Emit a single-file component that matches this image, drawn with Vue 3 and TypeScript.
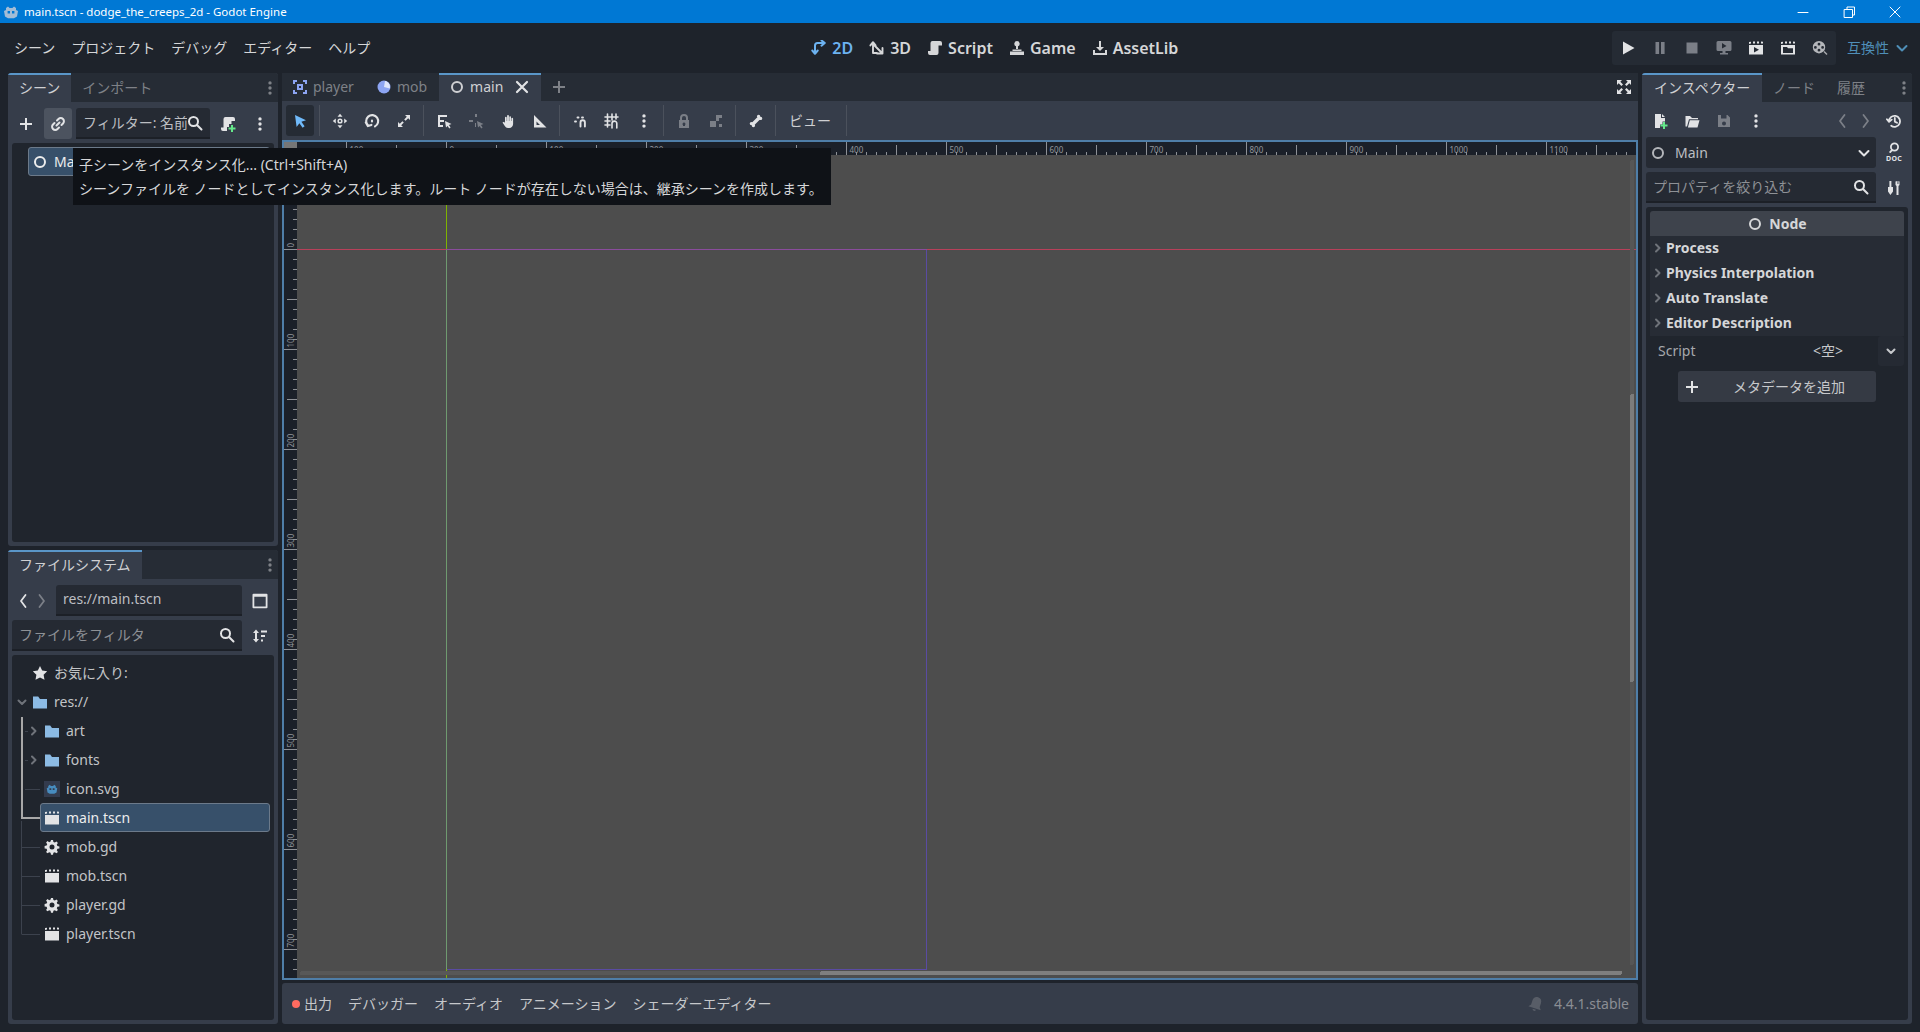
<script setup lang="ts">
import { h, type FunctionalComponent } from 'vue'

type Glyph = { d: string; s?: number; x?: string; c?: string }

const dots = 'M8 1.2a1.7 1.7 0 1 0 0 3.4 1.7 1.7 0 0 0 0-3.4zM8 6.3a1.7 1.7 0 1 0 0 3.4 1.7 1.7 0 0 0 0-3.4zM8 11.4a1.7 1.7 0 1 0 0 3.4 1.7 1.7 0 0 0 0-3.4z'
const clapper = 'M1 2l2-.3V3.6L1 3.9zM5 1.5h2v1.9H5zM9 1.5h2v1.9H9zM13 1.5l2 .2v1.9l-2-.2zM1 5h14v9.5H1z'
const cursor = 'M9 8l6.5 3-2.6 1 1.7 2.6-1.3.9-1.7-2.6L10 14.5z'

const glyphs: Record<string, Glyph> = {
  node: { d: 'M8 2a6 6 0 1 0 0 12A6 6 0 0 0 8 2zm0 2a4 4 0 1 1 0 8 4 4 0 0 1 0-8z' },
  plus: { d: 'M7 2h2v5h5v2H9v5H7V9H2V7h5z' },
  link: { d: 'M6.5 9.5l3-3M7 4.5l1.5-1.5a2.8 2.8 0 0 1 4.5 4.5L11.5 9M9 11.5L7.5 13A2.8 2.8 0 0 1 3 8.5L4.5 7', s: 2 },
  search: { d: 'M6.5 2a4.5 4.5 0 1 0 0 9 4.5 4.5 0 0 0 0-9zM10 10l4.5 4.5', s: 2 },
  scriptAdd: {
    d: 'M5.5 1H13a2 2 0 0 1 2 2v2h-3.5v3H9v3H7v4H3a2 2 0 0 1-2-2v-1.5h2.5V3a2 2 0 0 1 2-2z',
    x: 'M11 9h2v2.5h2.5v2H13V16h-2v-2.5H8.5v-2H11z',
    c: '#64e88a',
  },
  dots: { d: dots },
  scene2d: { d: 'M1 1h4v2H3v2H1zM11 1h4v4h-2V3h-2zM1 11h2v2h2v2H1zM13 11h2v4h-4v-2h2zM5 5h6v6H5zM7 7v2h2V7z' },
  globe: {
    d: 'M8 1.5a6.5 6.5 0 1 0 0 13 6.5 6.5 0 0 0 0-13z',
    x: 'M9 2c3 .4 5 2.8 5 6 0 .6-.1 1-.2 1.5L8 8z',
    c: '#dfe6fb',
  },
  close: { d: 'M3 3l10 10M13 3L3 13', s: 2.2 },
  fullscreen: { d: 'M1 1h5L4.3 2.7 7 5.4 5.4 7 2.7 4.3 1 6zM15 1v5l-1.7-1.7L10.6 7 9 5.4l2.7-2.7L10 1zM1 15v-5l1.7 1.7L5.4 9 7 10.6l-2.7 2.7L6 15zM15 15h-5l1.7-1.7L9 10.6 10.6 9l2.7 2.7L15 10z' },
  arrow: { d: 'M3 2l11 5.2-4.6 1.6 3.2 4.4-2 1.5-3.2-4.4L4.6 14z' },
  move: { d: 'M8 .8l2.5 3h-5zM8 15.2l-2.5-3h5zM.8 8l3-2.5v5zM15.2 8l-3 2.5v-5zM8 5.4a2.6 2.6 0 1 0 0 5.2 2.6 2.6 0 0 0 0-5.2zm0 1.5a1.1 1.1 0 1 1 0 2.2 1.1 1.1 0 0 1 0-2.2z' },
  rotate: { d: 'M4.2 12.6A6 6 0 1 1 11 13.4M1.8 9.5l2 3.6 3.6-1.2M8 7.6v.8', s: 2.1 },
  scale: { d: 'M9 2h5v5l-1.8-1.8L9.6 7.8 8.2 6.4l2.6-2.6zM7 14H2V9l1.8 1.8 2.6-2.6 1.4 1.4-2.6 2.6z' },
  list: { d: `M2 2h9v2H4v3h4v2H4v3h3v2H2z${cursor}` },
  pivot: { d: `M7 1h2v3H7zM1 7h4v2H1zM7 10h1v4H7z${cursor}` },
  hand: { d: 'M2.5 9.5l1.6-.8L5 10V4.4a.9.9 0 0 1 1.7 0V8h.4V2.8a.9.9 0 0 1 1.8 0V8h.4V3.8a.9.9 0 0 1 1.7 0V8h.4V5.4a.9.9 0 0 1 1.7 0V11c0 2.2-1.6 4-3.8 4H8c-1.5 0-2.4-.8-3.2-2z' },
  ruler: { d: 'M2 2l12.5 12.5H2zM4.5 8.5v3.5H8z' },
  snap: { d: 'M8.5 13.5V9.5a2.2 2.2 0 0 1 4.4 0v4M3 8.5h1M5.5 4.5h1M10 4.5h1', s: 1.9 },
  grid: { d: 'M1 4h13M1 8h5M1 12h5M3.5 1v13M8 1v6M12 1v5M8 15v-4.5a2 2 0 0 1 4.8 0V15', s: 1.6 },
  lock: { d: 'M8 1a4 4 0 0 0-4 4v2H3v8h10V7h-1V5a4 4 0 0 0-4-4zm0 2a2 2 0 0 1 2 2v2H6V5a2 2 0 0 1 2-2zm0 6.5a1.5 1.5 0 0 1 1 2.6V13H7v-.9a1.5 1.5 0 0 1 1-2.6z' },
  group: { d: 'M2 8h3v3H2zM5 11h3v3H5zM2 11h3v3H2zM5 8h3v3H5zM8 2h6v3H8zM8 5h3v3H8zM11 11h3v3h-3z' },
  bone: { d: 'M5 11l6-6M3.4 10.6v.01M5.4 12.6v.01M10.6 3.4v.01M12.6 5.4v.01', s: 3.4 },
  d2: { d: 'M4 13V5.5a2.5 2.5 0 0 1 2.5-2.5H13M1.3 10.5L4 13.8l2.7-3.3M10.5.4L13.8 3l-3.3 2.7', s: 2 },
  d3: { d: 'M4 13V2.5M1.4 5.4L4 2.2l2.6 3.2M4 4l9 9M8 13.5h5.5V8M4 13h4', s: 1.9 },
  script: { d: 'M5.5 1H13a2 2 0 0 1 2 2v2.5h-3.5V13a2 2 0 0 1-2 2H3a2 2 0 0 1-2-2v-2h2.5V3a2 2 0 0 1 2-2z' },
  game: { d: 'M8 1a2.7 2.7 0 0 0-1 5.2V9h2V6.2A2.7 2.7 0 0 0 8 1zM3.5 9.5h9V11h-9zM1 11.5h14v3.5H1z' },
  asset: { d: 'M7 1h2v6h3l-4 4-4-4h3zM1 10h2v3h10v-3h2v5H1z' },
  play: { d: 'M3 1.5L14.5 8 3 14.5z' },
  pause: { d: 'M3.5 2h3.6v12H3.5zM9 2h3.6v12H9z' },
  stop: { d: 'M2.5 2.5h11v11h-11z' },
  remote: { d: 'M2 1h12a1.5 1.5 0 0 1 1.5 1.5v7A1.5 1.5 0 0 1 14 11H2A1.5 1.5 0 0 1 .5 9.5v-7A1.5 1.5 0 0 1 2 1zM6 3v5.5L10.5 6zM6.5 11h3v2h-3zM4 13h8v1.5H4z' },
  movie: { d: `${clapper}M6 7l5 2.7-5 2.8z` },
  movieFolder: { d: `${clapper}M3 7h4l1 1.2h5V13H3z` },
  scene: { d: clapper },
  reel: {
    d: 'M7 1a6.2 6.2 0 1 0 0 12.4A6.2 6.2 0 0 0 7 1zm0 1.8a1.4 1.4 0 1 1 0 2.8 1.4 1.4 0 0 1 0-2.8zM3.4 6a1.4 1.4 0 1 1 0 2.8 1.4 1.4 0 0 1 0-2.8zm7.2 0a1.4 1.4 0 1 1 0 2.8 1.4 1.4 0 0 1 0-2.8zM7 8.8a1.4 1.4 0 1 1 0 2.8 1.4 1.4 0 0 1 0-2.8z',
    x: 'M11.5 12l1-1 3 3-1 1z',
    c: '#a9abaf',
  },
  newFile: {
    d: 'M3 1h6v4h4v3.5h-2.5v3H8V15H3zM10 1l3 3h-3z',
    x: 'M11 9h2v2.5h2.5v2H13V16h-2v-2.5H8.5v-2H11z',
    c: '#64e88a',
  },
  open: { d: 'M1.5 3h4.5l2 2h6v1.2H5L3 13.5H1.5zM5.8 7.2H15.5L13.5 14.5H3.9z' },
  save: { d: 'M2 2h9.5L14 4.5V14H2zM5 2v3.5h5.5V2zM8 8.5a2 2 0 1 0 0 4 2 2 0 0 0 0-4z' },
  history: { d: 'M3 8.5a5.5 5.5 0 1 1 2.2 4.2M.9 6.2l2.2 2.7 2.6-2.3M8.8 5v3.6l2.2 1.2', s: 1.8 },
  chevL: { d: 'M10.5 2L6 8l4.5 6', s: 1.8 },
  chevR: { d: 'M5.5 2L10 8l-4.5 6', s: 1.8 },
  chevD: { d: 'M3.5 6l4.5 4.5L12.5 6', s: 2 },
  smallR: { d: 'M6 4.5L9.5 8 6 11.5', s: 2 },
  smallD: { d: 'M4.5 6.5L8 10l3.5-3.5', s: 2 },
  lens: { d: 'M8.5 1.4a3.6 3.6 0 1 0 0 7.2 3.6 3.6 0 0 0 0-7.2zM6 8.2L4.2 10', s: 1.8 },
  tools: { d: 'M3.4 1h2v6H7v4.5L4.4 15 2 11.5V7h1.4zM9.5 1.5V5l1 1V15h2V6l1-1V1.5L12.4 1v3h-.9V1z' },
  layout: { d: 'M1.5 .8h13a1 1 0 0 1 1 1v12.4a1 1 0 0 1-1 1h-13a1 1 0 0 1-1-1V1.800a1 1 0 0 1 1-1zM2.300 3.800v9.600h11.400V3.800z' },
  sort: { d: 'M4 1.5L7 5H5v6h2l-3 3.5L1 11h2V5H1zM9 2.5h6v2H9zM9 7h4v2H9zM9 11.5h2v2H9z' },
  star: { d: 'M8 1l2.2 4.6 5 .7-3.6 3.5.9 5L8 12.4l-4.5 2.4.9-5L.8 6.3l5-.7z' },
  folder: { d: 'M1 2.5h5.2L8 5h7v9.5H1z' },
  gear: { d: 'M7 1h2l.4 2 1.4.6 1.7-1.1 1.4 1.4-1.1 1.7.6 1.4 2 .4v2l-2 .4-.6 1.4 1.1 1.7-1.4 1.4-1.7-1.1-1.4.6-.4 2H7l-.4-2-1.4-.6-1.7 1.1-1.4-1.4 1.1-1.7-.6-1.4-2-.4V7l2-.4.6-1.4-1.1-1.7 1.4-1.4 1.7 1.1 1.4-.6zM8 5.5a2.5 2.5 0 1 0 0 5 2.5 2.5 0 0 0 0-5z' },
  godot: { d: 'M3 4l2-1.6L6.6 4h2.8L11 2.4 13 4v2l2 1-1 5.5-3 1.7H5l-3-1.7L1 7l2-1zM4.6 7v2.4H7V7zM9 7v2.4h2.4V7z' },
  bell: { d: 'M8 1c3 0 4.5 2 4.5 5v4l2 2.5h-13l2-2.5V6C3.5 3 5 1 8 1zM6.3 13.5h3.4a1.7 1.7 0 0 1-3.4 0z' },
  winMin: { d: 'M3 8.5h10', s: 1 },
  winMax: { d: 'M3.5 5.5h8v8h-8zM6 5.5V3h7.5v8h-2', s: 1 },
  winClose: { d: 'M3 3l10 10M13 3L3 13', s: 1 },
}

// small inline icon, everything drawn on a 16x16 grid
const Ico: FunctionalComponent<{ n: string }> = (props) => {
  const g = glyphs[props.n]
  const kids = [
    h('path', {
      d: g.d,
      fill: g.s ? 'none' : 'currentColor',
      stroke: g.s ? 'currentColor' : 'none',
      'stroke-width': g.s,
      'stroke-linecap': g.s ? 'round' : undefined,
      'stroke-linejoin': g.s ? 'round' : undefined,
      'fill-rule': 'evenodd',
    }),
  ]
  if (g.x) kids.push(h('path', { d: g.x, fill: g.c }))
  return h('svg', { width: 16, height: 16, viewBox: '0 0 16 16', style: 'display:block;flex:none' }, kids)
}

const menus = ['シーン', 'プロジェクト', 'デバッグ', 'エディター', 'ヘルプ']

const modes = [
  { n: 'd2', label: '2D', on: true },
  { n: 'd3', label: '3D' },
  { n: 'script', label: 'Script' },
  { n: 'game', label: 'Game' },
  { n: 'asset', label: 'AssetLib' },
]

const runButtons = [
  { n: 'play', cls: 'bright' },
  { n: 'pause', cls: 'grey' },
  { n: 'stop', cls: 'grey' },
  { n: 'remote', cls: 'grey' },
  { n: 'movie', cls: 'bright' },
  { n: 'movieFolder', cls: 'bright' },
  { n: 'reel', cls: 'soft' },
]

const toolGroups = [
  [{ n: 'move' }, { n: 'rotate' }, { n: 'scale' }],
  [{ n: 'list' }, { n: 'pivot', dim: true }, { n: 'hand' }, { n: 'ruler' }],
  [{ n: 'snap' }, { n: 'grid' }, { n: 'dots' }],
  [{ n: 'lock', dim: true }, { n: 'group', dim: true }],
  [{ n: 'bone' }],
]

const files = [
  { label: 'お気に入り:', icon: 'star', depth: 0, cls: 'bright' },
  { label: 'res://', icon: 'folder', depth: 0, chev: 'smallD', cls: 'blue' },
  { label: 'art', icon: 'folder', depth: 1, chev: 'smallR', cls: 'blue' },
  { label: 'fonts', icon: 'folder', depth: 1, chev: 'smallR', cls: 'blue' },
  { label: 'icon.svg', icon: 'godot', depth: 1, cls: 'thumb' },
  { label: 'main.tscn', icon: 'scene', depth: 1, cls: 'bright', selected: true },
  { label: 'mob.gd', icon: 'gear', depth: 1, cls: 'bright' },
  { label: 'mob.tscn', icon: 'scene', depth: 1, cls: 'bright' },
  { label: 'player.gd', icon: 'gear', depth: 1, cls: 'bright' },
  { label: 'player.tscn', icon: 'scene', depth: 1, cls: 'bright' },
]

const sections = ['Process', 'Physics Interpolation', 'Auto Translate', 'Editor Description']
const bottomTabs = ['デバッガー', 'オーディオ', 'アニメーション', 'シェーダーエディター']

// rulers: world origin sits at 446.5 / 249.5, one unit is one pixel
const originX = 446.5
const originY = 249.5
let hTicks = ''
let vTicks = ''
const hLabels: { x: number; text: string }[] = []
const vLabels: { y: number; text: string }[] = []
for (let u = -140; u <= 1190; u += 10) {
  const x = originX + u
  const top = u % 100 === 0 ? 142 : u % 50 === 0 ? 145 : 152
  hTicks += `M${x} ${top}V155`
  if (u % 100 === 0) hLabels.push({ x: x + 3, text: String(Math.abs(u)) })
}
for (let u = -90; u <= 720; u += 10) {
  const y = originY + u
  const left = u % 100 === 0 ? 284 : u % 50 === 0 ? 287 : 293
  vTicks += `M${left} ${y}H297`
  if (u % 100 === 0) vLabels.push({ y: y - 2, text: String(Math.abs(u)) })
}
</script>

<template>
  <div class="app">
    <header class="titlebar">
      <Ico n="godot" class="logo" />
      <span class="title-text">main.tscn - dodge_the_creeps_2d - Godot Engine</span>
      <div class="win-buttons">
        <Ico n="winMin" />
        <Ico n="winMax" />
        <Ico n="winClose" />
      </div>
    </header>

    <nav class="menubar">
      <div class="menus">
        <span v-for="m in menus" :key="m">{{ m }}</span>
      </div>
      <div class="modes">
        <span v-for="m in modes" :key="m.label" class="mode" :class="{ on: m.on }">
          <Ico :n="m.n" />{{ m.label }}
        </span>
      </div>
      <div class="run">
        <span v-for="b in runButtons" :key="b.n" class="run-btn" :class="b.cls"><Ico :n="b.n" /></span>
      </div>
      <span class="renderer">互換性<Ico n="chevD" /></span>
    </nav>

    <main class="workspace">
      <aside class="dock">
        <section class="panel scene-panel">
          <div class="tabs">
            <span class="tab active">シーン</span>
            <span class="tab">インポート</span>
            <Ico n="dots" class="tab-menu" />
          </div>
          <div class="panel-body">
            <div class="row scene-tools">
              <span class="cell bright"><Ico n="plus" /></span>
              <span class="cell hover bright"><Ico n="link" /></span>
              <div class="input scene-filter">
                <span class="clip">フィルター: 名前</span>
                <Ico n="search" class="bright" />
              </div>
              <span class="cell bright"><Ico n="scriptAdd" /></span>
              <span class="cell bright"><Ico n="dots" /></span>
            </div>
            <div class="tree">
              <div class="tree-row">
                <div class="item selected"><Ico n="node" />Main</div>
              </div>
            </div>
          </div>
        </section>

        <section class="panel files-panel">
          <div class="tabs">
            <span class="tab active">ファイルシステム</span>
            <Ico n="dots" class="tab-menu" />
          </div>
          <div class="panel-body">
            <div class="row path-row">
              <span class="nav bright"><Ico n="chevL" /></span>
              <span class="nav grey"><Ico n="chevR" /></span>
              <div class="input path">res://main.tscn</div>
              <span class="side-cell bright"><Ico n="layout" /></span>
            </div>
            <div class="row">
              <div class="input grow">
                <span class="clip placeholder">ファイルをフィルタ</span>
                <Ico n="search" class="bright" />
              </div>
              <span class="side-cell bright"><Ico n="sort" /></span>
            </div>
            <div class="tree file-tree">
              <svg class="guides" width="262" height="365" viewBox="12 655 262 365">
                <path d="M22 717V819M21 818H40" stroke="#a8a8a8" stroke-width="2" fill="none" />
                <path d="M21.5 821V934.5M22 847.5H40M22 876.5H40M22 905.5H40M22 934.5H40M25 789.5H40M25 731.5H28M25 760.5H28" stroke="#3c424d" fill="none" />
              </svg>
              <div v-for="f in files" :key="f.label" class="tree-row" :class="'depth' + f.depth">
                <span class="chev"><Ico v-if="f.chev" :n="f.chev" /></span>
                <div class="item" :class="{ selected: f.selected }">
                  <Ico :n="f.icon" :class="f.cls" />{{ f.label }}
                </div>
              </div>
            </div>
          </div>
        </section>
      </aside>

      <div class="center">
        <div class="tabs doc-tabs">
          <span class="tab doc"><Ico n="scene2d" class="node-blue" />player</span>
          <span class="tab doc"><Ico n="globe" class="node-blue" />mob</span>
          <span class="tab doc active main-tab"><Ico n="node" />main<Ico n="close" class="tab-close" /></span>
          <Ico n="plus" class="tab-add" />
          <Ico n="fullscreen" class="tab-full" />
        </div>

        <div class="toolbar">
          <span class="tool-select"><Ico n="arrow" /></span>
          <template v-for="(group, i) in toolGroups" :key="i">
            <i class="sep" :class="{ first: i === 0 }"></i>
            <span v-for="t in group" :key="t.n" class="tool" :class="{ grey: t.dim }"><Ico :n="t.n" /></span>
          </template>
          <i class="sep"></i>
          <span class="view-btn">ビュー</span>
          <i class="sep"></i>
        </div>

        <div class="viewport">
          <svg class="canvas" width="1352" height="836" viewBox="284 142 1352 836">
            <rect x="284" y="142" width="1352" height="13" fill="#1b2029" />
            <rect x="284" y="142" width="13" height="836" fill="#1b2029" />
            <rect x="284" y="142" width="13" height="13" fill="#767676" />
            <path :d="hTicks + vTicks" stroke="#8d9096" fill="none" />
            <text v-for="l in hLabels" :key="l.text + 'h'" :x="l.x" y="153" class="ruler-text">{{ l.text }}</text>
            <text
              v-for="l in vLabels"
              :key="l.text + 'v'"
              x="294"
              :y="l.y"
              class="ruler-text"
              :transform="`rotate(-90 294 ${l.y})`"
            >{{ l.text }}</text>

            <path d="M297 249.5H446M927 249.5H1636" stroke="#b8405a" fill="none" />
            <path d="M446 249.5H927" stroke="#8a4c9c" fill="none" />
            <path d="M446.5 155V249M446.5 969V978" stroke="#7fb400" fill="none" />
            <path d="M446.5 250V969" stroke="#6f9a70" fill="none" />
            <path d="M926.5 250V969.5H447" stroke="#5a4ba2" fill="none" />

            <rect x="1630" y="160" width="4" height="805" rx="2" fill="#565656" />
            <rect x="1630" y="394" width="4" height="288" rx="2" fill="#7c7c7c" />
            <rect x="300" y="971" width="1322" height="4" rx="2" fill="#585858" />
            <rect x="820" y="971" width="802" height="4" rx="2" fill="#7f7f7f" />
          </svg>
        </div>

        <footer class="bottom">
          <span class="output"><i class="dot"></i>出力</span>
          <span v-for="t in bottomTabs" :key="t">{{ t }}</span>
          <span class="version"><Ico n="bell" class="bell" />4.4.1.stable</span>
        </footer>
      </div>

      <aside class="dock">
        <section class="panel inspector">
          <div class="tabs">
            <span class="tab active first-wide">インスペクター</span>
            <span class="tab">ノード</span>
            <span class="tab">履歴</span>
            <Ico n="dots" class="tab-menu" />
          </div>
          <div class="panel-body">
            <div class="insp-tools">
              <span class="insp-cell bright"><Ico n="newFile" /></span>
              <span class="insp-cell bright"><Ico n="open" /></span>
              <span class="insp-cell grey"><Ico n="save" /></span>
              <span class="insp-cell bright"><Ico n="dots" /></span>
              <span class="insp-nav grey"><Ico n="chevL" /></span>
              <span class="insp-nav grey"><Ico n="chevR" /></span>
              <span class="insp-cell bright"><Ico n="history" /></span>
            </div>
            <div class="row">
              <div class="input grow flat">
                <Ico n="node" class="soft" />
                <span class="clip node-name">Main</span>
                <Ico n="chevD" class="bright" />
              </div>
              <span class="side-cell bright doc-btn"><Ico n="lens" /><b>DOC</b></span>
            </div>
            <div class="row">
              <div class="input grow">
                <span class="clip placeholder">プロパティを絞り込む</span>
                <Ico n="search" class="bright" />
              </div>
              <span class="side-cell bright"><Ico n="tools" /></span>
            </div>
            <div class="props">
              <div class="class-head"><Ico n="node" />Node</div>
              <div class="section-list">
                <div v-for="s in sections" :key="s" class="section"><Ico n="smallR" class="sec-chev" />{{ s }}</div>
              </div>
              <div class="prop">
                <span class="prop-name">Script</span>
                <span class="prop-value">&lt;空&gt;</span>
                <span class="prop-drop"><Ico n="smallD" /></span>
              </div>
              <div class="add-meta"><Ico n="plus" class="bright" /><span>メタデータを追加</span></div>
            </div>
          </div>
        </section>
      </aside>
    </main>

    <div class="tooltip">
      <div>子シーンをインスタンス化... (Ctrl+Shift+A)</div>
      <div>シーンファイルを ノードとしてインスタンス化します。ルート ノードが存在しない場合は、継承シーンを作成します。</div>
    </div>
  </div>
</template>

<style>
html,
body {
  margin: 0;
  background: #1e232b;
  overflow: hidden;
}
</style>

<style scoped>
.app {
  position: relative;
  width: 1920px;
  height: 1032px;
  display: flex;
  flex-direction: column;
  overflow: hidden;
  background: #1e232b;
  color: #cfd0d3;
  font: 14px/20px "Noto Sans", "Noto Sans CJK JP", sans-serif;
}
.bright { color: #e2e3e5; }
.grey { color: #7b7f87; }
.soft { color: #b4b6ba; }
.blue { color: #8cbbe4; }
.node-blue { color: #8da5f3; }
.thumb {
  box-sizing: border-box;
  padding: 2px;
  background: #333b4d;
  color: #478cbf;
}

.titlebar {
  height: 23px;
  flex: none;
  display: flex;
  align-items: center;
  background: #0078d4;
  color: #fff;
  font-size: 11.5px;
}
.logo {
  margin: 0 5px 0 3px;
  color: #a3bcd6;
}
.win-buttons {
  margin-left: auto;
  margin-right: 17px;
  display: flex;
  gap: 30px;
}

.menubar {
  height: 50px;
  flex: none;
  display: flex;
  align-items: center;
  padding-left: 14px;
  color: #d5d6d8;
}
.menus {
  display: flex;
  gap: 16px;
}
.modes {
  display: flex;
  gap: 16px;
  margin-left: 441px;
  font-size: 16px;
  font-weight: 600;
}
.mode {
  display: flex;
  align-items: center;
  gap: 5px;
}
.mode.on { color: #6cb2f0; }
.run {
  margin-left: auto;
  height: 34px;
  display: flex;
  background: #252b34;
  border-radius: 3px;
}
.run-btn {
  width: 32px;
  display: flex;
  align-items: center;
  justify-content: center;
}
.renderer {
  display: flex;
  align-items: center;
  gap: 5px;
  margin: 0 10px 0 11px;
  color: #4f8fb8;
}

.workspace {
  flex: 1;
  min-height: 0;
  display: flex;
  gap: 4px;
  padding: 0 8px 8px;
}
.dock {
  width: 270px;
  flex: none;
  display: flex;
  flex-direction: column;
  gap: 4px;
}
.panel {
  display: flex;
  flex-direction: column;
  background: #363d4a;
  border-radius: 3px;
  overflow: hidden;
}
.scene-panel { height: 473px; flex: none; }
.files-panel, .inspector { flex: 1; min-height: 0; }

.tabs {
  height: 29px;
  flex: none;
  display: flex;
  align-items: stretch;
  background: #262c35;
  color: #7e8187;
}
.tab {
  display: flex;
  align-items: center;
  padding: 0 11px;
}
.tab.first-wide {
  width: 120px;
  box-sizing: border-box;
  padding: 0 0 0 12px;
}
.tab.active {
  background: #363d4a;
  box-shadow: inset 0 2px 0 #5a96c8;
  color: #cfd0d3;
}
.tab-menu {
  margin-left: auto;
  align-self: center;
  color: #7e8187;
}

.panel-body {
  flex: 1;
  min-height: 0;
  display: flex;
  flex-direction: column;
  gap: 4px;
  padding: 6px 4px 4px;
}
.row {
  height: 31px;
  flex: none;
  display: flex;
  align-items: stretch;
}
.cell {
  width: 28px;
  display: flex;
  align-items: center;
  justify-content: center;
  border-radius: 3px;
}
.cell.hover { background: #4c535f; }
.scene-tools .cell:first-child { margin-right: 4px; }
.scene-tools .cell:last-child { margin-left: 4px; }
.scene-filter {
  width: 134px;
  margin: 0 4px;
  padding-left: 6px;
  flex: none;
}
.input {
  box-sizing: border-box;
  display: flex;
  align-items: center;
  padding: 0 7px;
  background: #252a33;
  border-bottom: 2px solid #1c2027;
  border-radius: 3px 3px 0 0;
  color: #bcbec2;
}
.input.flat {
  border-bottom: 0;
  border-radius: 3px;
}
.grow {
  flex: 1;
  min-width: 0;
}
.clip {
  flex: 1;
  min-width: 0;
  overflow: hidden;
  white-space: nowrap;
}
.placeholder {
  padding-top: 1px;
  color: #8e9196;
}
.nav {
  width: 19px;
  flex: none;
  display: flex;
  align-items: center;
  justify-content: center;
}
.path-row .nav:first-child { margin-left: 1px; }
.path {
  width: 186px;
  flex: none;
  margin-left: 5px;
  padding-bottom: 1px;
}
.side-cell {
  width: 36px;
  flex: none;
  margin-right: -4px;
  display: flex;
  align-items: center;
  justify-content: center;
}

.tree {
  flex: 1;
  min-height: 0;
  background: #20252d;
  border-radius: 3px;
  padding-top: 4px;
  box-sizing: border-box;
}
.file-tree {
  position: relative;
  padding-top: 3px;
}
.guides {
  position: absolute;
  left: 0;
  top: 0;
}
.tree-row {
  position: relative;
  height: 29px;
  display: flex;
  padding-left: 2px;
  color: #c2c4c7;
}
.scene-tools + .tree .tree-row { padding-left: 16px; }
.tree-row.depth1 { padding-left: 14px; }
.chev {
  width: 16px;
  flex: none;
  margin-right: -2px;
  display: flex;
  align-items: center;
  color: #6f737a;
}
.item {
  flex: 1;
  min-width: 0;
  display: flex;
  align-items: center;
  gap: 6px;
  margin-right: 4px;
  padding: 0 3px;
  border: 1px solid transparent;
  border-radius: 3px;
}
.item.selected {
  background: #37506a;
  border-color: #6c7a8a;
  color: #eceded;
}

.center {
  flex: 1;
  min-width: 0;
  display: flex;
  flex-direction: column;
}
.doc-tabs { height: 28px; }
.tab.doc {
  gap: 5px;
  padding: 0 12px 0 10px;
}
.main-tab { padding: 0 11px 0 10px !important; }
.tab-close {
  margin-left: 6px;
  color: #e2e3e5;
}
.tab-add {
  align-self: center;
  margin-left: 10px;
  color: #7e8187;
}
.tab-full {
  align-self: center;
  margin: 0 6px 0 auto;
  color: #e2e3e5;
}

.toolbar {
  height: 39px;
  flex: none;
  display: flex;
  align-items: center;
  padding-left: 4px;
  background: #363d4a;
  color: #e2e3e5;
}
.tool-select {
  width: 28px;
  height: 31px;
  display: flex;
  align-items: center;
  justify-content: center;
  background: #252b34;
  border-radius: 3px;
  color: #70bafa;
}
.tool {
  width: 32px;
  display: flex;
  justify-content: center;
}
.tool.grey { color: #7b7f87; }
.sep {
  width: 1px;
  height: 31px;
  margin: 0 4px 0 3px;
  background: #4b515c;
}
.sep.first { margin-left: 5px; }
.view-btn {
  padding: 0 12px 0 9px;
  color: #cfd0d3;
}

.viewport {
  flex: 1;
  min-height: 0;
  position: relative;
  overflow: hidden;
  border: 2px solid #4f7ea8;
  background: #4d4d4d;
}
.canvas {
  display: block;
  shape-rendering: crispEdges;
}
.ruler-text {
  font-size: 8px;
  fill: #93969b;
}

.bottom {
  height: 41px;
  flex: none;
  margin-top: 3px;
  display: flex;
  align-items: center;
  gap: 16px;
  padding: 0 9px 0 10px;
  background: #363d4a;
  border-radius: 3px;
  color: #c6c8cb;
}
.output {
  display: flex;
  align-items: center;
}
.dot {
  width: 8px;
  height: 8px;
  margin-right: 4px;
  border-radius: 50%;
  background: #ff6b60;
}
.version {
  margin-left: auto;
  display: flex;
  align-items: center;
  gap: 10px;
  color: #8b8e94;
}
.bell {
  color: #585d67;
  transform: rotate(18deg);
}

.insp-tools {
  height: 32px;
  flex: none;
  display: flex;
  align-items: center;
  margin: -3px -2px -4px;
}
.insp-cell {
  width: 32px;
  display: flex;
  justify-content: center;
}
.insp-nav {
  width: 24px;
  display: flex;
  justify-content: center;
}
.insp-tools .insp-nav:nth-child(5) { margin-left: auto; }
.node-name { margin-left: 9px; }
.inspector .input { padding: 0 4px; }
.inspector .row:nth-child(3) .input { padding: 0 7px; }
.doc-btn {
  flex-direction: column;
}
.doc-btn b {
  margin-top: -3px;
  font-size: 7px;
  line-height: 8px;
  letter-spacing: .2px;
}

.props {
  flex: 1;
  min-height: 0;
  padding: 4px;
  background: #20252d;
  border-radius: 3px;
}
.class-head {
  height: 25px;
  display: flex;
  align-items: center;
  justify-content: center;
  gap: 6px;
  background: #3e434c;
  border-radius: 3px 3px 0 0;
  font-weight: 700;
  color: #d5d6d8;
}
.section-list { background: #272c35; }
.section {
  height: 25px;
  box-sizing: border-box;
  padding-bottom: 2px;
  display: flex;
  align-items: center;
  font-weight: 700;
  color: #d5d6d8;
}
.sec-chev {
  color: #6f737a;
}
.prop {
  height: 30px;
  display: flex;
  align-items: center;
  padding-left: 8px;
  color: #a6a8ac;
}
.prop-name { width: 120px; }
.prop-value {
  width: 100px;
  text-align: center;
  color: #c6c8cb;
}
.prop-drop {
  width: 26px;
  align-self: stretch;
  display: flex;
  align-items: center;
  justify-content: center;
  background: #252a33;
  border-radius: 3px;
  color: #c6c8cb;
}
.add-meta {
  width: 198px;
  height: 31px;
  margin: 5px 0 0 28px;
  box-sizing: border-box;
  display: flex;
  align-items: center;
  padding-left: 6px;
  background: #353a44;
  border-radius: 3px;
  color: #c6c8cb;
}
.add-meta span { margin-left: 33px; }

.tooltip {
  position: absolute;
  left: 73px;
  top: 148px;
  width: 758px;
  height: 57px;
  box-sizing: border-box;
  padding: 5px 0 0 6px;
  background: #0f1217;
  color: #d6d7d9;
  line-height: 24px;
  white-space: nowrap;
}
</style>
